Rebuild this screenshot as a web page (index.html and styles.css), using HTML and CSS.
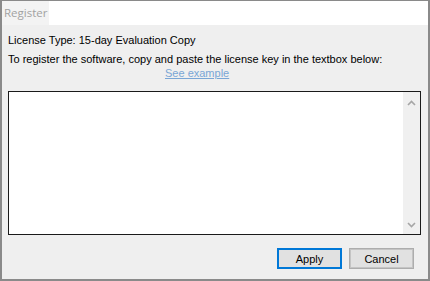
FILE: index.html
```html
<!DOCTYPE html>
<html lang="en">
<head>
  <meta charset="UTF-8" />
  <title>Register</title>
  <link rel="stylesheet" href="styles.css">
</head>
<body>

  <div class="window">
    <!-- barra de titulo -->
    <div class="titlebar">
      <span class="title">Register</span>
    </div>

    <div class="content">
      <p class="type">License Type: 15-day Evaluation Copy</p>
      <p class="instructions">To register the software, copy and paste the license key in the textbox below:</p>
      <a class="example" href="#">See example</a>

      <div class="keybox">
        <div class="keytext"></div>
        <div class="scrollbar">
          <svg width="9" height="6" viewBox="0 0 9 6"><path d="M1 5 L4.5 1.5 L8 5" fill="none" stroke="#a6a6a6" stroke-width="1.6"/></svg>
          <svg width="9" height="6" viewBox="0 0 9 6"><path d="M1 1 L4.5 4.5 L8 1" fill="none" stroke="#a6a6a6" stroke-width="1.6"/></svg>
        </div>
      </div>

      <div class="actions">
        <button class="apply">Apply</button>
        <button>Cancel</button>
      </div>
    </div>
  </div>

</body>
</html>
```

FILE: styles.css
```css
body {
  margin: 0;
  padding: 0;
  font-family: 'Liberation Sans', Arial, sans-serif;
  font-size: 11px;
  color: #000;
}

.window {
  width: 430px;
  height: 281px;
  box-sizing: border-box;
  border: 2px solid #8a8a8a;
  border-top-width: 1px;
  background: #efefef;
  display: flex;
  flex-direction: column;
}

.titlebar {
  height: 24px;
  flex-shrink: 0;
  background-color: white;
  display: flex;
  align-items: stretch;
}

.title {
  font-family: 'Open Sans', sans-serif;
  font-size: 11.5px;
  color: #a2a2a2;
  background: #f3f3f3;
  padding: 4px 2px 0 2px;
  line-height: 16px;
}

.content {
  flex: 1;
  padding: 8px 7px 0 6px;
  display: flex;
  flex-direction: column;
}

.content p {
  margin: 0;
  line-height: 14px;
}

.type {
  margin-bottom: 5px !important;
}

.example {
  color: #7aa6d6;
  line-height: 14px;
  align-self: flex-start;
  margin-left: 157px;
}

.keybox {
  margin-top: 11px;
  height: 144px;
  box-sizing: border-box;
  border: 1px solid #1a1a1a;
  background: #fff;
  display: flex;
}

.keytext {
  flex: 1;
}

.scrollbar {
  width: 17px;
  background: #f0f0f0;
  display: flex;
  flex-direction: column;
  justify-content: space-between;
  align-items: center;
  padding: 8px 0 6px 0;
}

.actions {
  margin-top: 13px;
  display: flex;
  justify-content: flex-end;
  gap: 7px;
  padding-right: 7px;
}

button {
  font-family: 'Liberation Sans', Arial, sans-serif;
  font-size: 11px;
  color: #000;
  width: 65px;
  height: 21px;
  padding: 0;
  background: #e1e1e1;
  border: 1px solid #adadad;
  box-shadow: inset 0 0 0 1px #c4c4c4;
}

.apply {
  border: 2px solid #0078d7;
  box-shadow: none;
}
```
